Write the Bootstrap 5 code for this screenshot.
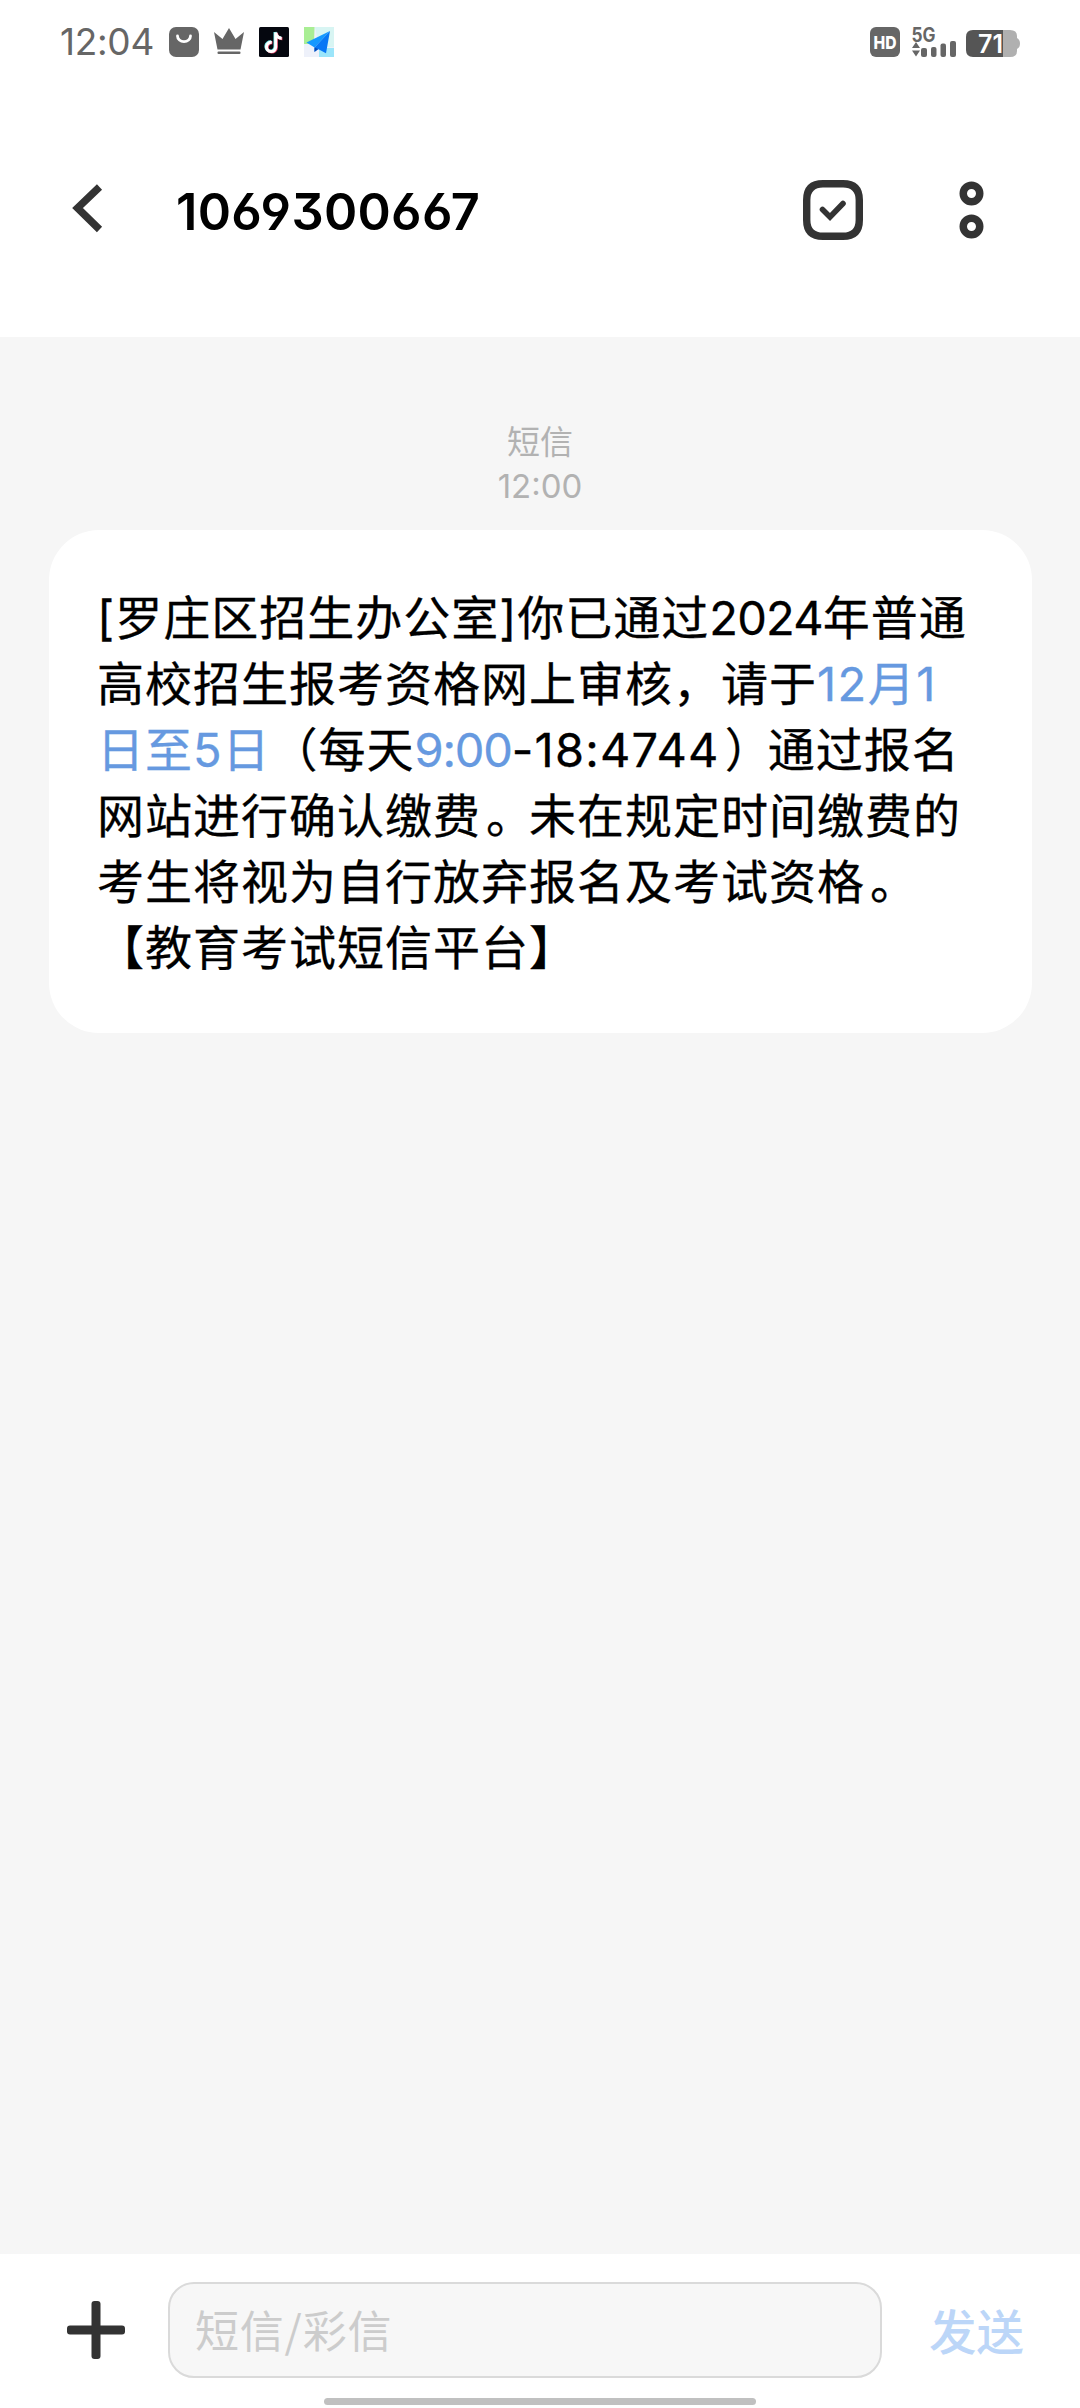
<!DOCTYPE html>
<html lang="zh-CN">
<head>
<meta charset="utf-8">
<meta name="viewport" content="width=device-width, initial-scale=1">
<title>1069300667</title>
<link rel="stylesheet" href="https://cdn.jsdelivr.net/npm/bootstrap@5.3.0/dist/css/bootstrap.min.css">
<style>
body{font-family:Inter,"Noto Sans CJK SC",sans-serif;background:#f6f6f6;color:#000;font-size:47px}
.screen{width:1080px;height:2408px}
.statusbar{height:84px;padding:0 60px 0 60px;color:#666}
.clock{font-size:37px;line-height:84px;width:109px;letter-spacing:-.3px;white-space:nowrap}
.status-icons{gap:15px}
.titlebar{height:253px;padding:0 96px 0 72px}
.back{margin-top:99px}
.number{font-size:50.5px;font-weight:600;line-height:60px;letter-spacing:.3px;margin:98px 0 0 72px;font-feature-settings:"cv03","cv04","ss01","cv09"}
.pick{margin:96px 96px 0 0}
.more{margin-top:97px}
.stamp{font-size:33px;line-height:44px;color:#b2b2b2;padding-top:83px;height:193px}
.bubble{width:983px;height:503px;margin-left:49px;border-radius:50px;padding:55px 0 0 48px;letter-spacing:1px;-webkit-text-stroke:.3px}
.ln{display:block;height:66px;line-height:66px;white-space:nowrap}
.yr{letter-spacing:-.8px}
.dt{letter-spacing:1.5px}
.tm{letter-spacing:-1.2px}
.rg{letter-spacing:1.2px}
.sh{display:inline-block;width:48px;text-indent:5px}
.bubble a{color:#6699e0;text-decoration:none}
.compose{height:154px;padding:0 55px 0 67px}
.field{width:714px;height:96px;margin:28px 0 0 43px;border:2px solid #dadada;border-radius:26px;background:#f7f7f7;color:#ccc;font-size:44px;letter-spacing:.8px;font-weight:400;line-height:91px;padding-left:25px;font-family:"Noto Sans CJK SC",sans-serif}
.send{color:#bcd6f8;font-size:47.5px;line-height:96px;font-weight:500;margin:31px 0 0 47px}
.plus{margin-top:47px}
.homebar{width:432px;height:7px;border-radius:4px;background:#c0c0c0;margin:-10px auto 3px;position:relative}
</style>
</head>
<body>
<main class="screen d-flex flex-column overflow-hidden">
  <header class="bg-white">
    <div class="statusbar d-flex align-items-center justify-content-between">
      <div class="d-flex align-items-center">
        <span class="clock">12:04</span>
        <div class="status-icons d-flex">
          <svg width="30" height="30" viewBox="0 0 30 30"><rect width="30" height="30" rx="7" fill="#666"/><path d="M8.500 9a6.500 5.600 0 0 0 13 0" fill="none" stroke="#fff" stroke-width="2.800" stroke-linecap="round"/></svg>
          <svg width="30" height="30" viewBox="0 0 30 30" fill="#666"><path d="M0 5l8.500 7L15 1l6.500 11L30 5l-3.500 17.500h-23z"/><rect x="3.500" y="24.500" width="23" height="2.600" rx="1"/></svg>
          <svg width="30" height="30" viewBox="0 0 30 30"><rect width="30" height="30" rx="1.500" fill="#05070f"/><g fill="none" stroke-width="3"><path d="M16 5v14.500a4.600 4.600 0 1 1-4-4.600M16 5c.6 3.700 3 5.600 6 5.800" stroke="#6ee8ea"/><path d="M17.400 6v14.500a4.600 4.600 0 1 1-4-4.600M17.400 6c.6 3.700 3 5.600 6 5.800" stroke="#ed4d70"/><path d="M16.700 5.500V20a4.600 4.600 0 1 1-4-4.600M16.700 5.500c.6 3.700 3 5.600 6 5.800" stroke="#fff"/></g></svg>
          <svg width="30" height="30" viewBox="0 0 30 30"><path fill="#eef1fa" d="M0 0h30v30H0z"/><path fill="#a9ee94" d="M0 0h10.500l-.5 17H0z"/><path fill="#d8f5f3" d="M11 0h19v20H15z"/><path fill="#9be5fa" d="M15 21h15v9H15z"/><path d="M26 4L2.500 15.500l8 5z" fill="#1598ff"/><path d="M26 4L10.500 20.500v4.300l4-2.600 7.500 4z" fill="#0877f5"/><path d="M10.500 20.500v4.500l3.500-3z" fill="#064ab6"/></svg>
        </div>
      </div>
      <svg width="152" height="44" viewBox="868 20 152 44" font-family="Inter,sans-serif" font-weight="700">
        <rect x="870" y="27" width="30" height="30" rx="6" fill="#666"/>
        <text x="873.500" y="48.500" font-size="18" font-weight="800" textLength="23" lengthAdjust="spacingAndGlyphs" fill="#fff">HD</text>
        <text x="911.500" y="41.500" font-size="19.500" textLength="24" lengthAdjust="spacingAndGlyphs" fill="#666">5G</text>
        <path d="M912 48l4-6 4 6zM912 50.500h8l-4 6z" fill="#666"/>
        <g fill="#666"><rect x="921" y="48" width="6" height="9" rx="2"/><rect x="931" y="47" width="5.500" height="10" rx="2"/><rect x="940.500" y="43.500" width="5.500" height="13.500" rx="2"/><rect x="950" y="41" width="6" height="16" rx="2"/></g>
        <path d="M1002 30h8q7 0 7 6v2q3 1.500 3 5.500t-3 5.500v2q0 6-7 6h-8z" fill="#b0b0b0"/>
        <path d="M1003 30h-30q-7 0-7 7v13q0 7 7 7h30z" fill="#555"/>
        <text x="978" y="53" font-size="25" textLength="25" lengthAdjust="spacingAndGlyphs" font-weight="600" fill="#fff">71</text>
      </svg>
    </div>
    <div class="titlebar d-flex align-items-start">
      <svg class="back" width="32" height="52" viewBox="0 0 32 52"><path d="M27.500 4L5.500 25 27.500 46.500" fill="none" stroke="#333" stroke-width="7.400"/></svg>
      <span class="number">1069300667</span>
      <svg class="pick ms-auto" width="60" height="60" viewBox="0 0 60 60" fill="none" stroke="#333"><path d="M20 3.700h20Q56.300 3.700 56.300 20v20Q56.300 56.300 40 56.300H20Q3.700 56.300 3.700 40V20Q3.700 3.700 20 3.700z" stroke-width="7.400"/><path d="M19.500 29.500l7.500 7.500 13-13.500" stroke-width="5.600" stroke-linecap="round"/></svg>
      <svg class="more" width="25" height="58" viewBox="0 0 25 58" fill="none" stroke="#333" stroke-width="7.500"><circle cx="12.500" cy="12.500" r="8.250"/><circle cx="12.500" cy="45.500" r="8.250"/></svg>
    </div>
  </header>
  <section class="flex-grow-1">
    <div class="stamp text-center"><div>短信</div><div>12:00</div></div>
    <div class="bubble bg-white">
      <span class="ln">[罗庄区招生办公室]你已通过<span class="yr">2024</span>年普通</span>
      <span class="ln">高校招生报考资格网上审核，请于<a href="#" class="dt">12月1</a></span>
      <span class="ln"><a href="#">日至5日</a>（每天<a href="#" class="tm">9:00</a><span class="rg">-18:4744</span><span class="sh">）</span>通过报名</span>
      <span class="ln">网站进行确认缴费<span class="sh">。</span>未在规定时间缴费的</span>
      <span class="ln">考生将视为自行放弃报名及考试资格<span class="sh">。</span></span>
      <span class="ln">【教育考试短信平台】</span>
    </div>
  </section>
  <footer class="bg-white">
    <div class="compose d-flex align-items-start">
      <svg class="plus" width="58" height="58" viewBox="0 0 58 58" fill="#333"><rect y="24.500" width="58" height="9" rx="3"/><rect x="24.500" width="9" height="58" rx="3"/></svg>
      <div class="field">短信/彩信</div>
      <span class="send">发送</span>
    </div>
    <div class="homebar"></div>
  </footer>
</main>
<script src="https://cdn.jsdelivr.net/npm/bootstrap@5.3.0/dist/js/bootstrap.bundle.min.js"></script>
</body>
</html>
